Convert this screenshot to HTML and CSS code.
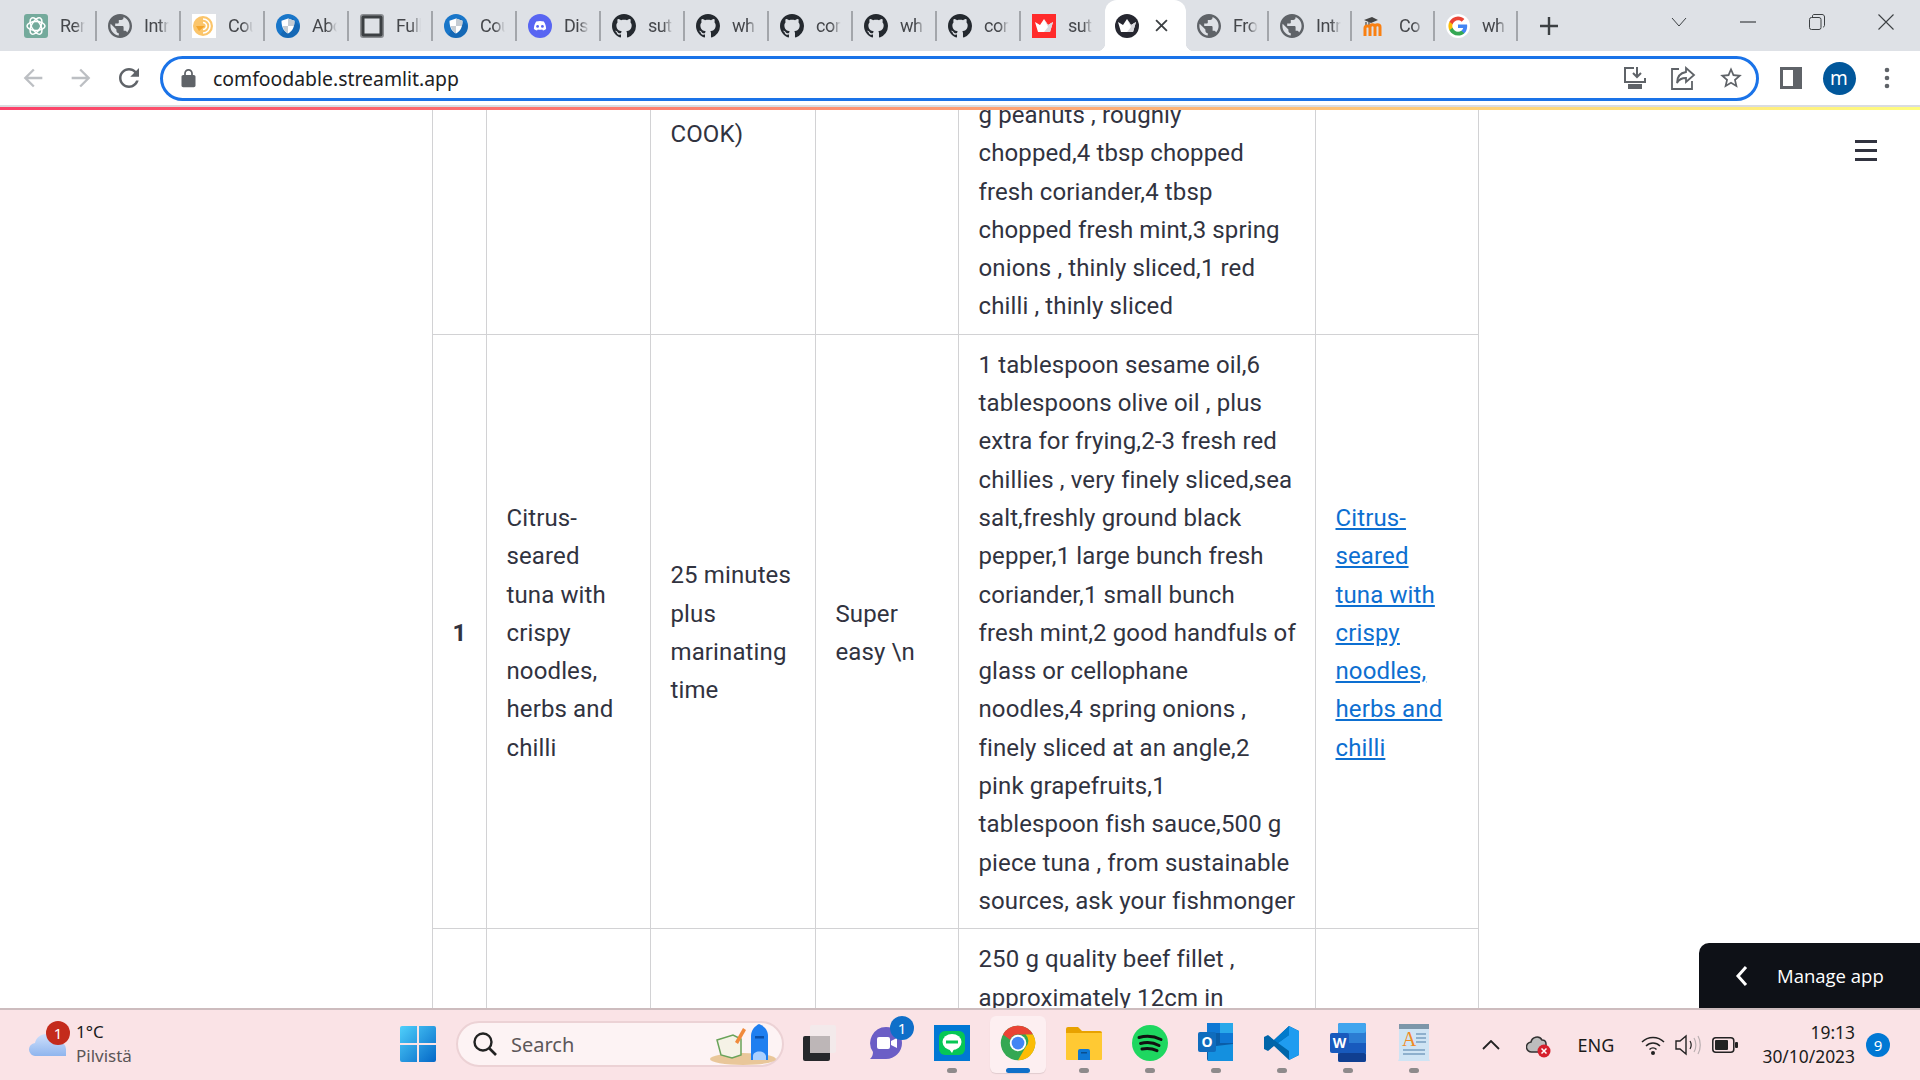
FILE: index.html
```html
<!DOCTYPE html>
<html lang="en">
<head>
    <meta charset="UTF-8">
    <title>comfoodable.streamlit.app</title>
    <link rel="stylesheet" href="styles.css">
</head>
<body>
    <svg class="sprites" width="0" height="0">
        <symbol id="i-github" viewBox="0 0 16 16"><path fill="#24292f" d="M8 0C3.58 0 0 3.58 0 8c0 3.54 2.29 6.53 5.47 7.59.4.07.55-.17.55-.38 0-.19-.01-.82-.01-1.49-2.01.37-2.53-.49-2.69-.94-.09-.23-.48-.94-.82-1.13-.28-.15-.68-.52-.01-.53.63-.01 1.08.58 1.23.82.72 1.21 1.87.87 2.33.66.07-.52.28-.87.51-1.07-1.78-.2-3.64-.89-3.64-3.95 0-.87.31-1.59.82-2.15-.08-.2-.36-1.02.08-2.12 0 0 .67-.21 2.2.82.64-.18 1.32-.27 2-.27s1.36.09 2 .27c1.53-1.04 2.2-.82 2.2-.82.44 1.1.16 1.92.08 2.12.51.56.82 1.27.82 2.15 0 3.07-1.87 3.75-3.65 3.95.29.25.54.73.54 1.48 0 1.07-.01 1.93-.01 2.2 0 .21.15.46.55.38A8.013 8.013 0 0016 8c0-4.42-3.58-8-8-8z"/></symbol>
        <symbol id="i-globe" viewBox="2 2 20 20"><path fill="#5f6368" d="M12 2C6.48 2 2 6.48 2 12s4.48 10 10 10 10-4.48 10-10S17.52 2 12 2zm-1 17.93c-3.95-.49-7-3.85-7-7.93 0-.62.08-1.21.21-1.79L9 15v1c0 1.1.9 2 2 2v1.93zm6.9-2.54c-.26-.81-1-1.39-1.9-1.39h-1v-3c0-.55-.45-1-1-1H8v-2h2c.55 0 1-.45 1-1V7h2c1.1 0 2-.9 2-2v-.41c2.93 1.19 5 4.06 5 7.41 0 2.08-.8 3.97-2.1 5.39z"/></symbol>
        <symbol id="i-shield" viewBox="0 0 24 24"><circle cx="12" cy="12" r="12" fill="#1976c9"/><path fill="#0d4f8f" d="M12 24a12 12 0 0 1-8-3L16 4l8 8a12 12 0 0 1-12 12z" opacity=".35"/><path fill="#fff" d="M12 4.5l6.5 2.3c0 6-1.8 10.3-6.5 12.7C7.3 17.100 5.500 12.800 5.500 6.800z"/><path fill="#c5ccd3" d="M12 4.500l6.500 2.300c0 1.800-.2 3.500-.6 5.200H12zM12 12v7.500c-2.600-1.300-4.300-3.400-5.300-7.500z"/></symbol>
        <symbol id="i-crown" viewBox="0 0 24 24"><path fill="#fff" d="M3 8l5 3 4-6 4 6 5-3-3 10H6z"/><path fill="#d9d9de" d="M12 5l4 6 5-3-3 10h-6l4-5z"/></symbol>
    </svg>

    <div class="tabstrip">
        <div class="tab">
            <svg class="favicon" viewBox="0 0 24 24"><rect width="24" height="24" rx="3" fill="#74aa9c"/><g fill="none" stroke="#fff" stroke-width="1.5"><ellipse cx="12" cy="12" rx="9" ry="4.500"/><ellipse cx="12" cy="12" rx="9" ry="4.500" transform="rotate(60 12 12)"/><ellipse cx="12" cy="12" rx="9" ry="4.500" transform="rotate(120 12 12)"/></g></svg>
            <span class="tab-label">Rer</span><i class="tab-sep"></i>
        </div>
        <div class="tab">
            <svg class="favicon"><use href="#i-globe"/></svg>
            <span class="tab-label">Intr</span><i class="tab-sep"></i>
        </div>
        <div class="tab">
            <svg class="favicon" viewBox="0 0 24 24"><rect width="24" height="24" fill="#fff"/><circle cx="11" cy="12" r="10" fill="#fbc56b"/><path fill="none" stroke="#fff" stroke-width="1.6" d="M11 5a7 7 0 0 1 7 7 7 7 0 0 1-7 7M11 8.500a3.500 3.500 0 0 1 3.500 3.500 3.500 3.500 0 0 1-3.500 3.500"/><path fill="#f4a52c" d="M4 12h9l-6 5z"/></svg>
            <span class="tab-label">Cou</span><i class="tab-sep"></i>
        </div>
        <div class="tab">
            <svg class="favicon"><use href="#i-shield"/></svg>
            <span class="tab-label">Abo</span><i class="tab-sep"></i>
        </div>
        <div class="tab">
            <svg class="favicon" viewBox="0 0 24 24"><rect width="24" height="24" rx="3" fill="#8a8d91"/><rect x="1.500" y="1.500" width="21" height="21" rx="2" fill="#3c4043"/><rect x="4.500" y="4.500" width="15" height="15" fill="#dee1e6"/></svg>
            <span class="tab-label">Full</span><i class="tab-sep"></i>
        </div>
        <div class="tab">
            <svg class="favicon"><use href="#i-shield"/></svg>
            <span class="tab-label">Cou</span><i class="tab-sep"></i>
        </div>
        <div class="tab">
            <svg class="favicon" viewBox="0 0 24 24"><circle cx="12" cy="12" r="12" fill="#5865f2"/><path fill="#fff" d="M8.200 7.500c2.400-.8 5.200-.8 7.600 0 1.500 2.200 2.300 4.700 2.300 7.500-1 .8-2 1.300-3.100 1.600l-.8-1.200c-1.500.4-2.900.4-4.400 0l-.8 1.200c-1.100-.3-2.100-.8-3.100-1.600 0-2.800.8-5.300 2.300-7.500z"/><circle cx="9.600" cy="12.400" r="1.400" fill="#5865f2"/><circle cx="14.400" cy="12.400" r="1.400" fill="#5865f2"/></svg>
            <span class="tab-label">Dis</span><i class="tab-sep"></i>
        </div>
        <div class="tab">
            <svg class="favicon"><use href="#i-github"/></svg>
            <span class="tab-label">sut</span><i class="tab-sep"></i>
        </div>
        <div class="tab">
            <svg class="favicon"><use href="#i-github"/></svg>
            <span class="tab-label">wh</span><i class="tab-sep"></i>
        </div>
        <div class="tab">
            <svg class="favicon"><use href="#i-github"/></svg>
            <span class="tab-label">cor</span><i class="tab-sep"></i>
        </div>
        <div class="tab">
            <svg class="favicon"><use href="#i-github"/></svg>
            <span class="tab-label">wh</span><i class="tab-sep"></i>
        </div>
        <div class="tab">
            <svg class="favicon"><use href="#i-github"/></svg>
            <span class="tab-label">cor</span><i class="tab-sep"></i>
        </div>
        <div class="tab">
            <svg class="favicon" viewBox="0 0 24 24"><rect width="24" height="24" fill="#ff2b2b"/><use href="#i-crown"/></svg>
            <span class="tab-label">sut</span>
        </div>
        <div class="tab tab-active">
            <svg class="favicon" viewBox="0 0 24 24"><circle cx="12" cy="12" r="12" fill="#262730"/><use href="#i-crown"/></svg>
            <svg class="tab-close" viewBox="0 0 12 12"><path d="M1 1l10 10M11 1L1 11" stroke="#3c4043" stroke-width="1.700"/></svg>
        </div>
        <div class="tab tab-after">
            <svg class="favicon"><use href="#i-globe"/></svg>
            <span class="tab-label">Fro</span><i class="tab-sep"></i>
        </div>
        <div class="tab tab-after">
            <svg class="favicon"><use href="#i-globe"/></svg>
            <span class="tab-label">Intr</span><i class="tab-sep"></i>
        </div>
        <div class="tab tab-after">
            <svg class="favicon" viewBox="0 0 24 24"><path d="M1 6l8-3 6 3-7 3z" fill="#444"/><path d="M6 11V8M3 8v5" stroke="#666" stroke-width="1.500"/><path d="M7 22V13c0-3 5-3 5 0v9M12 13c0-3 5-3 5 0v9M2 22v-8c0-2 3-3 5-1" fill="none" stroke="#f98012" stroke-width="3"/></svg>
            <span class="tab-label">Co</span><i class="tab-sep"></i>
        </div>
        <div class="tab tab-after">
            <svg class="favicon" viewBox="-3 -3 30 30"><circle cx="12" cy="12" r="15" fill="#fff"/><path fill="#4285F4" d="M23.490 12.270c0-.790-.070-1.540-.190-2.270H12v4.510h6.470c-.290 1.480-1.140 2.730-2.400 3.580v3h3.860c2.260-2.090 3.560-5.170 3.560-8.820z"/><path fill="#34A853" d="M12 24c3.240 0 5.950-1.080 7.930-2.910l-3.860-3c-1.080.720-2.450 1.160-4.070 1.160-3.130 0-5.780-2.110-6.730-4.960H1.290v3.090C3.260 21.300 7.310 24 12 24z"/><path fill="#FBBC05" d="M5.270 14.290C5.020 13.570 4.890 12.800 4.890 12s.140-1.570.380-2.290V6.620H1.290C.470 8.240 0 10.060 0 12s.470 3.760 1.290 5.380l3.980-3.090z"/><path fill="#EA4335" d="M12 4.750c1.770 0 3.350.610 4.600 1.800l3.420-3.420C17.950 1.190 15.240 0 12 0 7.310 0 3.260 2.700 1.290 6.620l3.980 3.090C6.220 6.860 8.870 4.750 12 4.750z"/></svg>
            <span class="tab-label">wh</span><i class="tab-sep"></i>
        </div>
        <div class="new-tab">
            <svg width="18" height="18" viewBox="0 0 18 18"><path d="M9 0v18M0 9h18" stroke="#3c4043" stroke-width="2.400"/></svg>
        </div>
        <div class="window-controls">
            <span class="win-btn"><svg width="16" height="10" viewBox="0 0 16 10"><path d="M1 1l7 8 7-8" fill="none" stroke="#3c4043"/></svg></span>
            <span class="win-btn"><svg width="16" height="2" viewBox="0 0 16 2"><path d="M0 1h16" stroke="#3c4043" stroke-width="1.200"/></svg></span>
            <span class="win-btn"><svg width="16" height="16" viewBox="0 0 16 16"><rect x=".5" y="3.500" width="11.500" height="12" rx="2" fill="none" stroke="#3c4043"/><path d="M3.500 3V2c0-1 .7-1.500 1.500-1.500h8c1.500 0 2.500 1 2.500 2.500v8.500c0 .8-.6 1.500-1.500 1.500" fill="none" stroke="#3c4043"/></svg></span>
            <span class="win-btn"><svg width="16" height="16" viewBox="0 0 16 16"><path d="M.5.5l15 15M15.500.5l-15 15" stroke="#3c4043" stroke-width="1.100"/></svg></span>
        </div>
    </div>

    <div class="toolbar">
        <span class="tool-btn"><svg width="28" height="28" viewBox="0 0 24 24"><path fill="#bcbfc3" d="M20 11H7.830l5.590-5.590L12 4l-8 8 8 8 1.410-1.410L7.830 13H20v-2z"/></svg></span>
        <span class="tool-btn"><svg width="28" height="28" viewBox="0 0 24 24"><path fill="#bcbfc3" d="M12 4l-1.410 1.410L16.170 11H4v2h12.170l-5.580 5.590L12 20l8-8z"/></svg></span>
        <span class="tool-btn"><svg width="30" height="30" viewBox="0 0 24 24"><path fill="#5f6368" d="M17.650 6.350C16.200 4.900 14.210 4 12 4c-4.420 0-7.990 3.580-7.990 8s3.570 8 7.990 8c3.730 0 6.840-2.550 7.730-6h-2.080c-.820 2.330-3.040 4-5.650 4-3.310 0-6-2.690-6-6s2.690-6 6-6c1.660 0 3.140.690 4.220 1.780L13 11h7V4l-2.350 2.350z"/></svg></span>
        <div class="omnibox">
            <svg class="lock" viewBox="0 0 24 24"><path fill="#5f6368" d="M18 8h-1V6c0-2.760-2.240-5-5-5S7 3.240 7 6v2H6c-1.100 0-2 .9-2 2v10c0 1.100.9 2 2 2h12c1.100 0 2-.9 2-2V10c0-1.100-.9-2-2-2zM9 6c0-1.660 1.340-3 3-3s3 1.340 3 3v2H9V6z"/></svg>
            <span class="url">comfoodable.streamlit.app</span>
            <div class="omni-actions">
                <svg width="26" height="26" viewBox="0 0 26 26"><path d="M12 3H3v14h20v-4" fill="none" stroke="#5f6368" stroke-width="2"/><path d="M15 2v10m-4-4l4 4 4-4" fill="none" stroke="#5f6368" stroke-width="2"/><rect x="6" y="19" width="14" height="5" fill="#5f6368"/></svg>
                <svg width="26" height="26" viewBox="0 0 26 26"><path d="M9 4H2v20h20v-8" fill="none" stroke="#5f6368" stroke-width="1.800"/><path d="M16 3l8 7-8 7v-4c-4 0-7 1-9 5 0-6 3-10 9-11z" fill="none" stroke="#5f6368" stroke-width="1.800"/></svg>
                <svg width="26" height="26" viewBox="0 0 24 24"><path fill="#5f6368" d="M22 9.240l-7.190-.620L12 2 9.190 8.630 2 9.240l5.460 4.730L5.820 21 12 17.270 18.180 21l-1.630-7.030L22 9.240zM12 15.400l-3.760 2.270 1-4.280-3.320-2.880 4.380-.380L12 6.100l1.710 4.040 4.380.380-3.320 2.880 1 4.280L12 15.400z"/></svg>
            </div>
        </div>
        <span class="tool-btn"><svg width="22" height="22" viewBox="0 0 22 22"><path fill="#5f6368" fill-rule="evenodd" d="M0 0h22v22H0zM3 3v16h10V3z"/></svg></span>
        <span class="tool-btn"><span class="avatar">m</span></span>
        <span class="tool-btn"><svg width="6" height="22" viewBox="0 0 6 22"><circle cx="3" cy="3" r="2.300" fill="#5f6368"/><circle cx="3" cy="11" r="2.300" fill="#5f6368"/><circle cx="3" cy="19" r="2.300" fill="#5f6368"/></svg></span>
    </div>

    <div class="decoration"></div>

    <main class="page">
        <div class="burger"><i></i><i></i><i></i></div>

        <table class="recipes">
            <colgroup>
                <col class="col-index">
                <col class="col-name">
                <col class="col-time">
                <col class="col-level">
                <col class="col-ingredients">
                <col class="col-link">
            </colgroup>
            <tr>
                <th></th>
                <td></td>
                <td class="cell-cut">COOK)</td>
                <td></td>
                <td>g peanuts , roughly<br>chopped,4 tbsp chopped<br>fresh coriander,4 tbsp<br>chopped fresh mint,3 spring<br>onions , thinly sliced,1 red<br>chilli , thinly sliced</td>
                <td></td>
            </tr>
            <tr>
                <th>1</th>
                <td>Citrus-<br>seared<br>tuna with<br>crispy<br>noodles,<br>herbs and<br>chilli</td>
                <td>25 minutes<br>plus<br>marinating<br>time</td>
                <td>Super<br>easy \n</td>
                <td>1 tablespoon sesame oil,6<br>tablespoons olive oil , plus<br>extra for frying,2-3 fresh red<br>chillies , very finely sliced,sea<br>salt,freshly ground black<br>pepper,1 large bunch fresh<br>coriander,1 small bunch<br>fresh mint,2 good handfuls of<br>glass or cellophane<br>noodles,4 spring onions ,<br>finely sliced at an angle,2<br>pink grapefruits,1<br>tablespoon fish sauce,500 g<br>piece tuna , from sustainable<br>sources, ask your fishmonger</td>
                <td><a href="#">Citrus-<br>seared<br>tuna with<br>crispy<br>noodles,<br>herbs and<br>chilli</a></td>
            </tr>
            <tr>
                <th></th>
                <td></td>
                <td></td>
                <td></td>
                <td>250 g quality beef fillet ,<br>approximately 12cm in</td>
                <td></td>
            </tr>
        </table>

        <div class="manage-app">
            <svg width="14" height="22" viewBox="0 0 14 22"><path d="M11 2l-8 9 8 9" fill="none" stroke="#fff" stroke-width="3"/></svg>
            <span>Manage app</span>
        </div>
    </main>

    <footer class="taskbar">
        <div class="weather">
            <div class="weather-icon">
                <svg width="37" height="26" viewBox="0 0 37 26"><defs><linearGradient id="cloud" x1="0" y1="0" x2="0" y2="1"><stop offset="0" stop-color="#cfe0fb"/><stop offset="1" stop-color="#8fb5ee"/></linearGradient></defs><path fill="url(#cloud)" d="M7 26a6.500 6.500 0 0 1-1-13c1.500-7 9-11 15-8 3 1.500 5 4 5.500 7H30a7 7 0 0 1 7 7v7z"/></svg>
                <span class="weather-badge">1</span>
            </div>
            <div class="weather-text">
                <span class="temp">1°C</span>
                <span class="sky">Pilvistä</span>
            </div>
        </div>
        <div class="task-cell task-start">
            <svg width="36" height="36" viewBox="0 0 36 36"><defs><linearGradient id="win" x1="0" y1="0" x2="1" y2="1"><stop offset="0" stop-color="#4fd0fb"/><stop offset="1" stop-color="#0467c7"/></linearGradient></defs><path fill="url(#win)" d="M2 0h15v17H0V2a2 2 0 0 1 2-2zM19 0h15a2 2 0 0 1 2 2v15H19zM0 19h17v17H2a2 2 0 0 1-2-2zM19 19h17v15a2 2 0 0 1-2 2H19z"/></svg>
        </div>
        <div class="search">
            <svg width="26" height="26" viewBox="0 0 26 26"><circle cx="11" cy="11" r="8.500" fill="none" stroke="#222" stroke-width="2.400"/><path d="M17 17l7 7" stroke="#222" stroke-width="2.600"/></svg>
            <span class="search-text">Search</span>
            <svg class="search-art" width="68" height="44" viewBox="0 0 68 44"><ellipse cx="34" cy="37" rx="33" ry="6" fill="#e9c79a"/><path d="M8 18l16-5 8 4v16l-9 3-11-3z" fill="#f5f2e6" stroke="#6aa35a" stroke-width="1.500"/><path d="M26 20l8-14 3 2-8 14z" fill="#f08a3c"/><path d="M42 38V14c0-6 4-10 8-12 5 2 9 6 9 12v24z" fill="#1f7ff0"/><path d="M44 34c0-6 12-6 13 0v4H44z" fill="#a9d0ff"/><rect x="46" y="14" width="9" height="2.500" fill="#0b4fa8"/></svg>
        </div>
        <div class="task-cell">
            <svg width="36" height="36" viewBox="0 0 36 36"><rect x="1" y="11" width="27" height="25" rx="2" fill="#26282b"/><rect x="8" y="0" width="26" height="28" rx="2" fill="#f3eaeb"/><rect x="8" y="11" width="20" height="17" fill="#bdb6b7"/></svg>
        </div>
        <div class="task-cell">
            <div class="task-icon">
                <svg width="36" height="36" viewBox="0 0 36 36"><path fill="#6b5ec6" d="M18 2a16 16 0 0 1 0 32H2c2-2 3-4 3-7A16 16 0 0 1 18 2z"/><rect x="9" y="12" width="13" height="12" rx="2" fill="#fff"/><path d="M23 16l6-3v10l-6-3z" fill="#fff"/></svg>
                <span class="app-badge">1</span>
            </div>
        </div>
        <div class="task-cell running">
            <svg width="36" height="36" viewBox="0 0 36 36"><rect width="36" height="36" fill="#0078d4"/><rect x="5" y="6" width="26" height="24" rx="6" fill="#06c755"/><ellipse cx="18" cy="17" rx="9.500" ry="8" fill="#fff"/><path d="M15 24l3 4 2-4z" fill="#fff"/><rect x="12" y="15.500" width="12" height="3" fill="#06c755"/></svg>
        </div>
        <div class="task-cell running active">
            <svg width="36" height="36" viewBox="0 0 48 48"><circle cx="24" cy="24" r="23" fill="#34a853"/><path fill="#ea4335" d="M24 1a23 23 0 0 1 20 11.500H24a11.500 11.500 0 0 0-10.500 7L4 12.500A23 23 0 0 1 24 1z"/><path fill="#fbbc05" d="M44 12.500A23 23 0 0 1 24 47l10-17.300a11.500 11.500 0 0 0 0-17.200z"/><circle cx="24" cy="24" r="11" fill="#fff"/><circle cx="24" cy="24" r="8.500" fill="#4285f4"/></svg>
        </div>
        <div class="task-cell running">
            <svg width="36" height="36" viewBox="0 0 36 36"><path fill="#e8a200" d="M0 4a2 2 0 0 1 2-2h10l4 4h18a2 2 0 0 1 2 2v4H0z"/><path fill="#ffc933" d="M0 8h36v26a1 1 0 0 1-1 1H1a1 1 0 0 1-1-1z"/><path fill="#0f78d4" d="M12 26a2 2 0 0 1 2-2h8a2 2 0 0 1 2 2v9H12z"/><rect x="15" y="27" width="6" height="1.500" fill="#0a4f8f"/></svg>
        </div>
        <div class="task-cell running">
            <svg width="36" height="36" viewBox="0 0 36 36"><circle cx="18" cy="18" r="18" fill="#1ed760"/><path d="M7 12.500c7-2 15-1.500 22 2M8.500 18.500c6-1.500 13-1 18.500 2M10 24c5-1 10-.7 15 1.700" fill="none" stroke="#111" stroke-width="3" stroke-linecap="round"/></svg>
        </div>
        <div class="task-cell running">
            <svg width="36" height="40" viewBox="0 0 36 40"><rect x="9" width="26" height="38" rx="2" fill="#0a5da8"/><rect x="9" width="13" height="10" fill="#0f78d4"/><rect x="22" width="13" height="10" fill="#28a8ea"/><rect x="22" y="10" width="13" height="10" fill="#0f78d4"/><path d="M10 24l25-3v17H10z" fill="#1490df"/><rect y="9" width="18" height="20" rx="2" fill="#0f6cbd"/><text class="tile-letter" x="9" y="24">O</text></svg>
        </div>
        <div class="task-cell running">
            <svg width="36" height="36" viewBox="0 0 36 36"><path fill="#0065a9" d="M25 1l10 5v24l-10 5L10 21l-6 5-4-2V12l4-2 6 5z"/><path fill="#1f9cf0" d="M25 1l10 5v24l-10 5zM25 10L14 18l11 8z"/><path fill="#007acc" d="M25 1v9L14 18l-4-3z"/></svg>
        </div>
        <div class="task-cell running">
            <svg width="36" height="40" viewBox="0 0 36 40"><rect x="8" width="28" height="39" rx="2" fill="#2b7cd3"/><rect x="8" width="28" height="10" rx="2" fill="#41a5ee"/><rect x="8" y="20" width="28" height="10" fill="#185abd"/><rect x="8" y="30" width="28" height="9" rx="2" fill="#103f91"/><rect y="10" width="19" height="20" rx="2" fill="#185abd"/><text class="tile-letter" x="9.500" y="25">W</text></svg>
        </div>
        <div class="task-cell running">
            <svg width="32" height="38" viewBox="0 0 32 38"><rect x="1" width="30" height="7" fill="#7d96a9"/><path d="M1 5h30v30l1 2H0l1-2z" fill="#cfe4f4"/><text class="wordpad-a" x="4" y="22">A</text><path d="M18 10h10M18 14h10M18 18h10M5 26h22M5 30h22" stroke="#7a9fc0" stroke-width="1.500"/></svg>
        </div>

        <div class="tray">
            <span class="tray-cell tray-chevron"><svg width="18" height="10" viewBox="0 0 18 10"><path d="M1 9l8-8 8 8" fill="none" stroke="#222" stroke-width="1.800"/></svg></span>
            <span class="tray-cell tray-cloud"><svg width="26" height="26" viewBox="0 0 26 26"><path d="M6 20a5 5 0 0 1-1-10c1-5 8-7 11-2 2 0 4 1 4 4v8z" fill="#bdbdbd" stroke="#333" stroke-width="1.500"/><circle cx="18" cy="19" r="6.500" fill="#d61f2c"/><path d="M15.500 16.500l5 5M20.500 16.500l-5 5" stroke="#fff" stroke-width="1.500"/></svg></span>
            <span class="tray-cell tray-lang">ENG</span>
            <span class="tray-cell tray-wifi"><svg width="24" height="20" viewBox="0 0 24 20"><path d="M1 7c6-6 16-6 22 0M5 11c4-4 10-4 14 0M8.500 14.500c2-2 5-2 7 0" fill="none" stroke="#222" stroke-width="1.500"/><circle cx="12" cy="18" r="2" fill="#222"/></svg></span>
            <span class="tray-cell tray-sound"><svg width="26" height="22" viewBox="0 0 26 22"><path d="M1 7h4l6-5v18l-6-5H1z" fill="none" stroke="#222" stroke-width="1.400"/><path d="M15 7c1.500 2.500 1.500 5.500 0 8" fill="none" stroke="#222" stroke-width="1.200"/><path d="M19 4c2.500 4 2.500 10 0 14M23 2c3 5 3 13 0 18" fill="none" stroke="#b9aeb0" stroke-width="1.200"/></svg></span>
            <span class="tray-cell tray-battery"><svg width="26" height="16" viewBox="0 0 26 16"><rect x=".8" y=".8" width="21" height="14.400" rx="3" fill="none" stroke="#222" stroke-width="1.500"/><rect x="3" y="3" width="13" height="10" rx="1" fill="#222"/><rect x="23" y="5" width="3" height="6" rx="1" fill="#222"/></svg></span>
            <div class="clock">
                <span>19:13</span>
                <span>30/10/2023</span>
            </div>
            <span class="notify">9</span>
        </div>
    </footer>
</body>
</html>
```

FILE: styles.css
```css
*,
*::after,
*::before {
    box-sizing: border-box;
}
html,
body {
    height: 100%;
}
body {
    margin: 0;
    display: flex;
    flex-direction: column;
    overflow: hidden;
    font-family: "Noto Sans", "Open Sans", sans-serif;
    color: #202124;
    background: #fff;
}
.sprites {
    position: absolute;
}

/* tabs */
.tabstrip {
    flex: 0 0 51px;
    display: flex;
    padding-left: 13px;
    background: #dee1e6;
}
.tab {
    flex: 0 0 84px;
    display: flex;
    align-items: center;
    padding: 0 0 0 11px;
    height: 51px;
}
.tab-after {
    flex-basis: 83px;
}
.favicon {
    flex: 0 0 24px;
    width: 24px;
    height: 24px;
}
.tab-label {
    flex: 0 0 25px;
    margin-left: 12px;
    overflow: hidden;
    font-family: Roboto, sans-serif;
    font-size: 18px;
    letter-spacing: -0.5px;
    color: #45474b;
    white-space: nowrap;
    -webkit-mask-image: linear-gradient(90deg, #000 60%, transparent);
    mask-image: linear-gradient(90deg, #000 60%, transparent);
}
.tab-sep {
    flex: 0 0 2px;
    height: 30px;
    margin-left: auto;
    background: #a3a6ab;
}
.tab-active {
    position: relative;
    flex-basis: 81px;
    padding-left: 10px;
    background: #fff;
    border-radius: 12px 12px 0 0;
}
.tab-active::before,
.tab-active::after {
    content: "";
    position: absolute;
    bottom: 0;
    width: 8px;
    height: 8px;
}
.tab-active::before {
    left: -8px;
    background: radial-gradient(circle at 0 0, transparent 8px, #fff 8.500px);
}
.tab-active::after {
    right: -8px;
    background: radial-gradient(circle at 100% 0, transparent 8px, #fff 8.500px);
}
.tab-close {
    width: 13px;
    height: 13px;
    margin-left: 16px;
}
.new-tab {
    flex: 0 0 62px;
    display: flex;
    align-items: center;
    justify-content: center;
}
.window-controls {
    display: flex;
    margin-left: auto;
    height: 44px;
}
.win-btn {
    flex: 0 0 69px;
    display: flex;
    align-items: center;
    justify-content: center;
}

/* toolbar */
.toolbar {
    flex: 0 0 54px;
    display: flex;
    align-items: center;
    padding: 0 9px;
    background: #fff;
}
.tool-btn {
    flex: 0 0 48px;
    display: flex;
    align-items: center;
    justify-content: center;
}
.omnibox {
    flex: 1;
    display: flex;
    align-items: center;
    height: 45px;
    margin: 0 8px 0 7px;
    padding: 0 12px 0 15px;
    border: 3px solid #1a73e8;
    border-radius: 23px;
}
.lock {
    width: 21px;
    height: 21px;
}
.url {
    margin-left: 14px;
    font-size: 19.400px;
    color: #202124;
}
.omni-actions {
    display: flex;
    gap: 22px;
    margin-left: auto;
}
.avatar {
    display: flex;
    align-items: center;
    justify-content: center;
    width: 33px;
    height: 33px;
    border-radius: 50%;
    background: #01579b;
    color: #fff;
    font-size: 19px;
}
.decoration {
    flex: 0 0 5px;
    border-top: 2px solid #dadce0;
    background: linear-gradient(90deg, #fb4169, #fffd80);
}

/* streamlit page */
.page {
    position: relative;
    flex: 1;
    min-height: 0;
    overflow: hidden;
    padding-left: 432px;
}
.burger {
    position: absolute;
    top: 30px;
    right: 43px;
    display: flex;
    flex-direction: column;
    gap: 6px;
    width: 22px;
}
.burger i {
    height: 3px;
    background: #31333f;
}
.recipes {
    width: 1046px;
    margin-top: -26px;
    border-collapse: collapse;
    table-layout: fixed;
    font-family: Roboto, "Noto Sans", sans-serif;
    font-size: 24px;
    letter-spacing: 0.12px;
    line-height: 38.300px;
    color: #31333f;
}
.recipes th,
.recipes td {
    padding: 11px 19.500px 8px;
    border: 1px solid #d2d2d4;
    font-weight: 400;
    white-space: nowrap;
    text-align: left;
}
.recipes th {
    font-weight: 700;
    text-align: center;
    padding: 3px 0 0;
}
.recipes a {
    color: #0d6fd1;
}
.recipes .cell-cut {
    vertical-align: top;
    padding-top: 30px;
}
.col-index {
    width: 54px;
}
.col-name {
    width: 164px;
}
.col-time {
    width: 165px;
}
.col-level {
    width: 143px;
}
.col-ingredients {
    width: 357px;
}
.col-link {
    width: 163px;
}
.manage-app {
    position: absolute;
    right: 0;
    bottom: 0;
    display: flex;
    align-items: center;
    width: 221px;
    height: 65px;
    padding-left: 36px;
    gap: 28px;
    background: #0e1117;
    border-top-left-radius: 10px;
    color: #fff;
    font-family: "Open Sans", sans-serif;
    font-size: 18.500px;
}

/* taskbar */
.taskbar {
    flex: 0 0 72px;
    display: flex;
    align-items: center;
    padding-left: 29px;
    border-top: 2px solid #cdbcbe;
    background: #fae3e6;
}
.weather {
    flex: 0 0 356px;
    display: flex;
    gap: 10px;
}
.weather-icon {
    position: relative;
    width: 37px;
    margin-top: 8px;
}
.weather-badge {
    position: absolute;
    top: -9px;
    left: 17px;
    width: 24px;
    height: 24px;
    border-radius: 50%;
    background: #c42b1c;
    color: #fff;
    font-size: 15px;
    line-height: 24px;
    text-align: center;
}
.weather-text {
    display: flex;
    flex-direction: column;
    margin-top: -2px;
    font-size: 17px;
    line-height: 24px;
}
.temp {
    color: #1b1b1b;
}
.sky {
    color: #5b5556;
}
.task-cell {
    position: relative;
    flex: 0 0 66px;
    display: flex;
    align-items: center;
    justify-content: center;
    align-self: stretch;
    padding-bottom: 4px;
}
.task-start {
    padding-bottom: 2px;
}
.running::after {
    content: "";
    position: absolute;
    left: 28px;
    bottom: 7px;
    width: 10px;
    height: 5px;
    border-radius: 3px;
    background: #8e8a8b;
}
.active::before {
    content: "";
    position: absolute;
    top: 6px;
    left: 5px;
    width: 56px;
    height: 57px;
    border-radius: 6px;
    background: #fdeff1;
    box-shadow: 0 1px 1px rgba(0, 0, 0, 0.1);
}
.active svg {
    position: relative;
}
.active::after {
    left: 21px;
    width: 24px;
    background: #0f6fc9;
}
.search {
    flex: 0 0 328px;
    display: flex;
    align-items: center;
    height: 46px;
    margin: -2px 3px 0 5px;
    padding-left: 14px;
    border: 2px solid #ecd2d5;
    border-radius: 23px;
    background: #fdf3f4;
}
.search-text {
    margin-left: 13px;
    font-size: 20px;
    color: #5c5759;
}
.search-art {
    margin-left: auto;
    margin-right: 5px;
}
.task-icon {
    position: relative;
    height: 36px;
}
.app-badge {
    position: absolute;
    top: -9px;
    right: -10px;
    width: 24px;
    height: 24px;
    border-radius: 50%;
    background: #0f6fc9;
    color: #fff;
    font-size: 15px;
    line-height: 24px;
    text-align: center;
}
.tile-letter {
    fill: #fff;
    font-family: "Noto Sans", sans-serif;
    font-size: 14px;
    font-weight: 700;
    text-anchor: middle;
}
.wordpad-a {
    fill: #f08a24;
    font-family: "Liberation Serif", serif;
    font-size: 20px;
}
.tray {
    display: flex;
    align-items: center;
    margin-left: 23px;
}
.tray-cell {
    display: flex;
    align-items: center;
    justify-content: center;
}
.tray-chevron {
    width: 42px;
}
.tray-cloud {
    width: 42px;
    margin-left: 6px;
}
.tray-lang {
    width: 50px;
    margin-left: 11px;
    font-size: 18px;
    color: #1b1b1b;
}
.tray-wifi {
    width: 34px;
    margin-left: 15px;
}
.tray-sound {
    width: 36px;
}
.tray-battery {
    width: 38px;
}
.clock {
    display: flex;
    flex-direction: column;
    align-items: flex-end;
    width: 111px;
    margin-top: -2px;
    font-size: 17.400px;
    line-height: 24px;
    color: #1b1b1b;
}
.notify {
    width: 24px;
    height: 24px;
    margin-left: 11px;
    border-radius: 50%;
    background: #0078d4;
    color: #fff;
    font-size: 15px;
    line-height: 24px;
    text-align: center;
}
```
